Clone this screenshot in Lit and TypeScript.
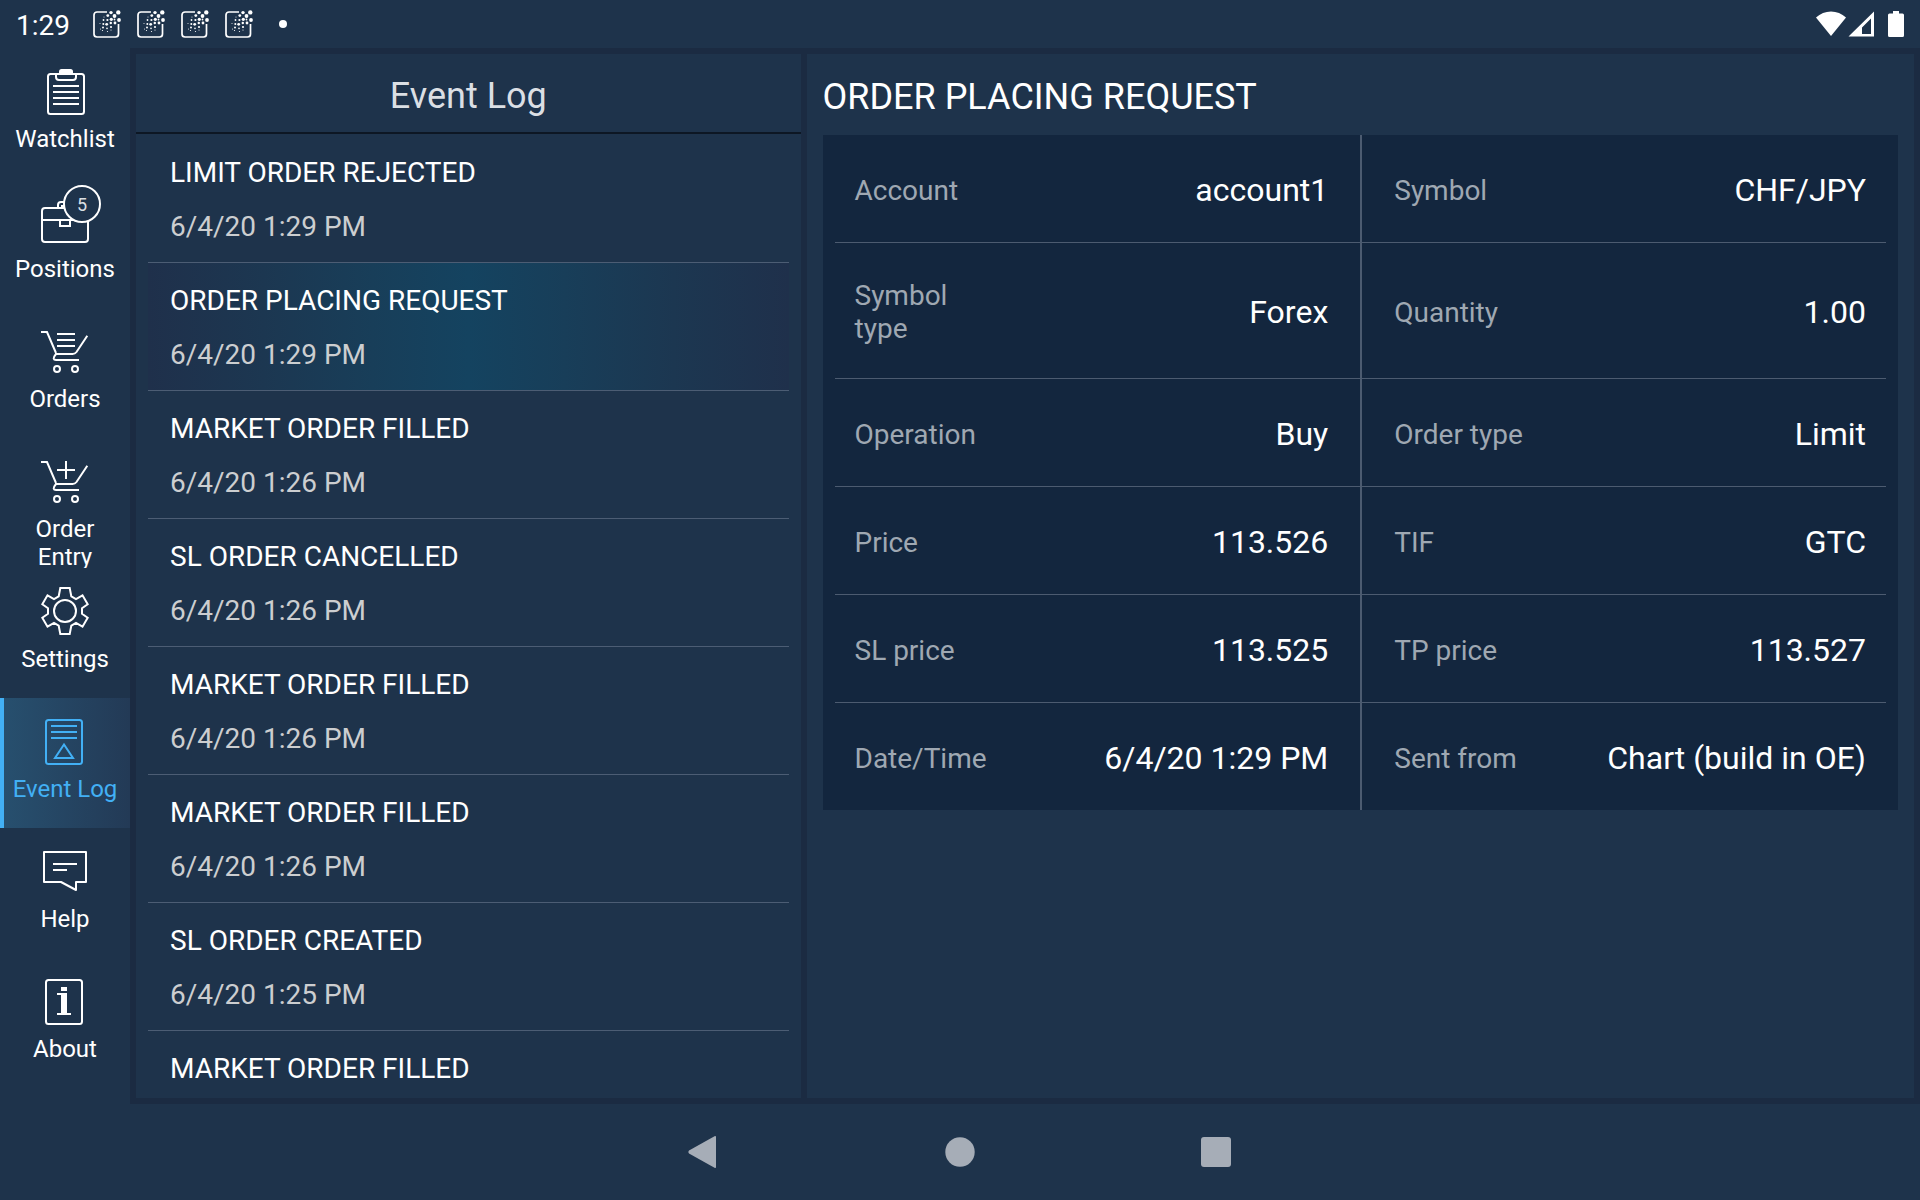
import { LitElement, html, svg, css, nothing } from "lit";
import { customElement, property, state } from "lit/decorators.js";
import { classMap } from "lit/directives/class-map.js";

interface Section {
  label: string;
  icon: string;
  badge?: number;
}

interface LogEvent {
  title: string;
  time: string;
}

const SECTIONS: Section[] = [
  { label: "Watchlist", icon: "watchlist" },
  { label: "Positions", icon: "positions", badge: 5 },
  { label: "Orders", icon: "orders" },
  { label: "Order Entry", icon: "entry" },
  { label: "Settings", icon: "settings" },
  { label: "Event Log", icon: "log" },
  { label: "Help", icon: "help" },
  { label: "About", icon: "about" },
];

const EVENTS: LogEvent[] = [
  { title: "LIMIT ORDER REJECTED", time: "6/4/20 1:29 PM" },
  { title: "ORDER PLACING REQUEST", time: "6/4/20 1:29 PM" },
  { title: "MARKET ORDER FILLED", time: "6/4/20 1:26 PM" },
  { title: "SL ORDER CANCELLED", time: "6/4/20 1:26 PM" },
  { title: "MARKET ORDER FILLED", time: "6/4/20 1:26 PM" },
  { title: "MARKET ORDER FILLED", time: "6/4/20 1:26 PM" },
  { title: "SL ORDER CREATED", time: "6/4/20 1:25 PM" },
  { title: "MARKET ORDER FILLED", time: "6/4/20 1:25 PM" },
];

const DETAILS: [string, string][] = [
  ["Account", "account1"],
  ["Symbol", "CHF/JPY"],
  ["Symbol type", "Forex"],
  ["Quantity", "1.00"],
  ["Operation", "Buy"],
  ["Order type", "Limit"],
  ["Price", "113.526"],
  ["TIF", "GTC"],
  ["SL price", "113.525"],
  ["TP price", "113.527"],
  ["Date/Time", "6/4/20 1:29 PM"],
  ["Sent from", "Chart (build in OE)"],
];

const cart = svg`
  <path d="M0 5H6L15 26M46.300 8.700L35.500 25Q34 27 31.500 27H15Q12.500 30 12.700 31.500Q13 33 15 33H38"/>
  <circle cx="16" cy="42" r="3"/>
  <circle cx="34" cy="42" r="3"/>`;

/* Outlines are drawn in a 48 x 48 box with a 2px stroke. */
const ICONS: Record<string, unknown> = {
  watchlist: svg`
    <rect x="7" y="7" width="36" height="40" rx="2.500"/>
    <path d="M15 7V10A3 3 0 0 0 18 13H32A3 3 0 0 0 35 10V7"/>
    <path class="solid" d="M18 7V4.500A2.500 2.500 0 0 1 20.500 2H29.500A2.500 2.500 0 0 1 32 4.500V7Z"/>
    <path d="M12 19H38M12 25H38M12 31H38M12 37H38"/>`,
  positions: svg`
    <rect x="1" y="11" width="46" height="34" rx="3"/>
    <path d="M1 23H47M19 23V29H29V23M17 11V8A3 3 0 0 1 20 5H28A3 3 0 0 1 31 8V11M21 11V9H27V11"/>`,
  orders: svg`${cart}<path d="M16 7H34M16 13H34M16 19H34"/>`,
  entry: svg`${cart}<path d="M16 13H34M25 4V22"/>`,
  settings: svg`
    <circle cx="24" cy="24" r="11"/>
    <path d="M19.300 1H28.700L30.300 9.300L35 12L41.500 8.300L46.700 17.300L41 21.300V26.700L46.700 30.700L41.500 39.700L35 36L30.300 38.700L28.700 47H19.300L17.700 38.700L13 36L6.500 39.700L1.300 30.700L7 26.700V21.300L1.300 17.300L6.500 8.300L13 12L17.700 9.300Z"/>`,
  log: svg`
    <rect x="5" y="3" width="36" height="44" rx="2.500"/>
    <path d="M10 9H36M10 15H36M10 21H36M23 27.500L14 41H32Z"/>`,
  help: svg`
    <path stroke-linejoin="round" d="M3 5H45V35H35V43L20 35H3Z"/>
    <path d="M12 17H36M12 23H26"/>`,
  about: svg`
    <rect x="5" y="3" width="36" height="44" rx="2.500"/>
    <path class="solid" d="M20 10H26V14H20ZM16 16H26V36H30V38H16V36H20V18H16Z"/>`,
};

const SPECKS: [number, number, number][] = [
  [25.3, 2.4, 2.2], [18, 2.6, 1.7], [21.5, 6, 1.9], [26, 10, 1.9],
  [14.8, 5.6, 1.4], [18.3, 9.3, 1.6], [22, 13, 1.4], [14.4, 10, 1.1],
  [13.7, 14.3, 1.4], [17.8, 13, 1.2], [18, 17, 1.1], [10.5, 10, 0.9],
  [10.3, 14, 1], [10, 17.6, 1], [14, 18.4, 0.8], [21.5, 9.5, 0.9],
  [7, 13.6, 0.5], [11, 7, 0.5], [9.5, 20.5, 0.6], [14.5, 21.5, 0.6],
  [7.5, 19, 0.5], [18, 20, 0.6],
];

@customElement("status-bar")
class StatusBar extends LitElement {
  static styles = css`
    :host {
      display: flex;
      align-items: center;
      height: 48px;
      padding: 0 16px;
      box-sizing: border-box;
      color: #fff;
    }
    .time {
      padding-top: 2px;
      font-size: 28px;
      line-height: 33px;
    }
    .notices {
      display: flex;
      align-items: center;
      gap: 16px;
      margin-left: 23px;
    }
    .more {
      margin-left: 10px;
    }
    .system {
      display: flex;
      align-items: center;
      margin-left: auto;
    }
    .cell {
      margin: 0 14px 0 2px;
    }
    svg {
      display: block;
      overflow: visible;
      fill: currentColor;
    }
    .outline {
      fill: none;
      stroke: currentColor;
      stroke-width: 1.7;
    }
  `;

  render() {
    return html`
      <span class="time">1:29</span>
      <div class="notices">
        ${[0, 1, 2, 3].map(
          () => html`<svg width="28" height="28" viewBox="0 0 28 28" aria-hidden="true">
            <path class="outline" d="M14 2H4A3 3 0 0 0 1 5V24A3 3 0 0 0 4 27H22.500A3 3 0 0 0 25.500 24V14"/>
            ${SPECKS.map(([x, y, r]) => svg`<circle cx=${x} cy=${y} r=${r} />`)}
          </svg>`
        )}
        <svg class="more" width="8" height="8" viewBox="0 0 8 8" aria-hidden="true"><circle cx="4" cy="4" r="4"/></svg>
      </div>
      <div class="system">
        <svg width="30" height="26" viewBox="0 0 30 26" aria-hidden="true">
          <path d="M0 6.500Q6.500 0.500 15 0.500T30 6.500L15 25Z"/>
        </svg>
        <svg class="cell" width="26" height="26" viewBox="0 0 26 26" aria-hidden="true">
          <path fill-rule="evenodd" d="M26 0.500V25.500H0.500ZM23 7.500L14 16.500V23H23Z"/>
        </svg>
        <svg width="16" height="26" viewBox="0 0 16 26" aria-hidden="true">
          <path d="M5 0H11V2.500H14.500Q16 2.500 16 4V24.500Q16 26 14.500 26H1.500Q0 26 0 24.500V4Q0 2.500 1.500 2.500H5Z"/>
        </svg>
      </div>
    `;
  }
}

@customElement("side-nav")
class SideNav extends LitElement {
  @property() active = "";

  static styles = css`
    :host {
      display: block;
      width: 130px;
      flex: none;
    }
    .item {
      position: relative;
      display: flex;
      flex-direction: column;
      align-items: center;
      gap: 10px;
      height: 130px;
      padding: 19px 8px 0;
      box-sizing: border-box;
      overflow: hidden;
      color: #fff;
      font-size: 24px;
      line-height: 28px;
      text-align: center;
      text-decoration: none;
    }
    .item.active {
      color: #42b0f5;
      background: linear-gradient(90deg, #27506f, #233a56);
      box-shadow: inset 4px 0 #42b0f5;
    }
    .icon {
      flex: none;
      width: 48px;
      height: 48px;
      fill: none;
      stroke: currentColor;
      stroke-width: 2;
    }
    .solid {
      fill: currentColor;
      stroke: none;
    }
    .label {
      margin: 0 -8px;
    }
    .label.narrow {
      margin: 0 16px;
    }
    .badge {
      position: absolute;
      top: 7px;
      left: 63px;
      width: 38px;
      height: 38px;
      box-sizing: border-box;
      border: 2px solid #fff;
      border-radius: 50%;
      background: #1e334b;
      color: #dbdfe4;
      font-size: 18px;
      line-height: 36px;
    }
  `;

  render() {
    return html`<nav>
      ${SECTIONS.map(
        (s) => html`<a
          class=${classMap({ item: true, active: s.label === this.active })}
          href="#${s.icon}"
        >
          <svg class="icon" viewBox="0 0 48 48" aria-hidden="true">${ICONS[s.icon]}</svg>
          <span class=${classMap({ label: true, narrow: s.icon === "entry" })}>${s.label}</span>
          ${s.badge ? html`<span class="badge">${s.badge}</span>` : nothing}
        </a>`
      )}
    </nav>`;
  }
}

@customElement("event-list")
class EventList extends LitElement {
  @property({ type: Number }) selected = 0;

  static styles = css`
    :host {
      display: flex;
      flex-direction: column;
      min-height: 0;
      background: #1e334b;
    }
    .heading {
      margin: 0;
      padding: 21px 0 15px;
      border-bottom: 2px solid #0d1724;
      color: #dbdfe4;
      font-size: 36px;
      font-weight: 400;
      line-height: 42px;
      text-align: center;
    }
    .rows {
      flex: 1;
      min-height: 0;
      margin: 0;
      padding: 0 12px;
      overflow: hidden;
      list-style: none;
    }
    .row {
      display: flex;
      flex-direction: column;
      gap: 21px;
      width: 100%;
      height: 128px;
      padding: 21px 22px 0;
      box-sizing: border-box;
      border: 0;
      border-top: 1px solid #4c5d74;
      background: none;
      color: #fff;
      font: inherit;
      font-size: 28px;
      line-height: 33px;
      text-align: left;
    }
    .row.first {
      border-top-color: transparent;
    }
    .row.selected {
      background: linear-gradient(
        90deg,
        #1f304b,
        #1c3751 18%,
        #183e59 35%,
        #144360 50%,
        #183e59 65%,
        #1c3751 82%,
        #1f304b
      );
    }
    .time {
      color: #ccced0;
    }
  `;

  private pick(index: number) {
    this.dispatchEvent(new CustomEvent("pick", { detail: index }));
  }

  render() {
    return html`
      <h2 class="heading">Event Log</h2>
      <ul class="rows">
        ${EVENTS.map(
          (e, i) => html`<li>
            <button
              class=${classMap({ row: true, first: i === 0, selected: i === this.selected })}
              @click=${() => this.pick(i)}
            >
              <span>${e.title}</span>
              <span class="time">${e.time}</span>
            </button>
          </li>`
        )}
      </ul>
    `;
  }
}

@customElement("event-details")
class EventDetails extends LitElement {
  @property() heading = "";

  static styles = css`
    :host {
      display: block;
      padding: 0 16px;
      background: #1e334b;
    }
    .heading {
      margin: 0;
      padding: 22px 0 17px;
      color: #fff;
      font-size: 36px;
      font-weight: 400;
      line-height: 42px;
    }
    .card {
      display: grid;
      grid-template-columns: 1fr 1fr;
      margin: 0;
      background: #13263e;
    }
    .field {
      display: flex;
      align-items: center;
      justify-content: space-between;
      margin-left: 12px;
      padding: 36px 32px 33px 20px;
      border-bottom: 1px solid #4c5b70;
    }
    .field:nth-child(even) {
      margin: 0 12px 0 0;
      padding: 36px 20px 33px 32px;
      border-left: 2px solid #4c5b70;
    }
    .field:nth-last-child(-n + 2) {
      border-bottom: 0;
    }
    .name {
      max-width: 30%;
      color: #9fa8b2;
      font-size: 28px;
      line-height: 33px;
    }
    .value {
      margin: 0;
      color: #fff;
      font-size: 32px;
      line-height: 38px;
      white-space: nowrap;
    }
  `;

  render() {
    return html`
      <h1 class="heading">${this.heading}</h1>
      <dl class="card">
        ${DETAILS.map(
          ([name, value]) => html`<div class="field">
            <dt class="name">${name}</dt>
            <dd class="value">${value}</dd>
          </div>`
        )}
      </dl>
    `;
  }
}

@customElement("app-root")
class AppRoot extends LitElement {
  @state() private selected = 1;

  static styles = css`
    :host {
      display: flex;
      flex-direction: column;
      height: 100vh;
      overflow: hidden;
      background: #1e334b;
      font-family: Roboto, "Liberation Sans", sans-serif;
    }
    .body {
      display: flex;
      flex: 1;
      min-height: 0;
    }
    .frame {
      display: grid;
      flex: 1;
      grid-template-columns: 3fr 5fr;
      grid-template-rows: minmax(0, 1fr);
      gap: 6px;
      min-width: 0;
      padding: 6px;
      background: #1b2b42;
    }
    .system-nav {
      display: flex;
      justify-content: center;
      gap: 208px;
      padding: 24px 0;
    }
    .key {
      width: 48px;
      height: 48px;
      padding: 0;
      border: 0;
      background: none;
      color: #a6adb7;
    }
    .glyph {
      display: block;
      fill: currentColor;
    }
  `;

  render() {
    return html`
      <status-bar></status-bar>
      <div class="body">
        <side-nav active="Event Log"></side-nav>
        <main class="frame">
          <event-list
            .selected=${this.selected}
            @pick=${(e: CustomEvent<number>) => (this.selected = e.detail)}
          ></event-list>
          <event-details .heading=${EVENTS[this.selected].title}></event-details>
        </main>
      </div>
      <footer class="system-nav">
        <button class="key" aria-label="Back">
          <svg class="glyph" width="48" height="48" viewBox="0 0 48 48">
            <path d="M34.500 8.300Q36 7.500 36 9V39Q36 40.500 34.500 39.700L9 25.500Q7.500 24 9 22.500Z"/>
          </svg>
        </button>
        <button class="key" aria-label="Home">
          <svg class="glyph" width="48" height="48" viewBox="0 0 48 48"><circle cx="24" cy="24" r="14.700"/></svg>
        </button>
        <button class="key" aria-label="Recent apps">
          <svg class="glyph" width="48" height="48" viewBox="0 0 48 48">
            <rect x="9" y="9" width="30" height="30" rx="3"/>
          </svg>
        </button>
      </footer>
    `;
  }
}
